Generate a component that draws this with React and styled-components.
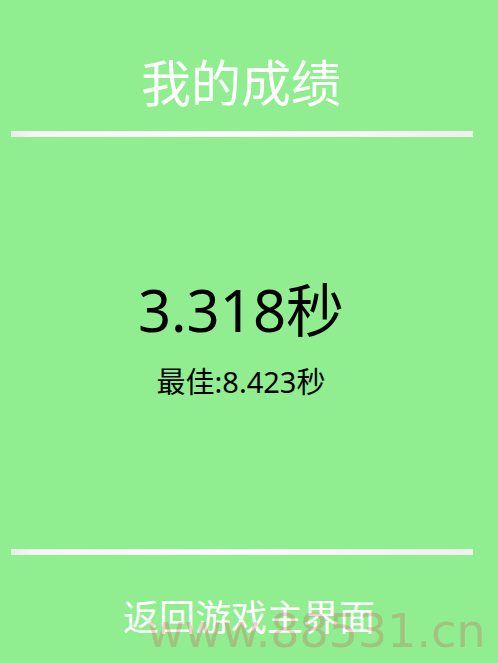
import React from "react";
import styled, { createGlobalStyle } from "styled-components";

const GlobalStyle = createGlobalStyle`
  html, body {
    margin: 0;
    padding: 0;
    background: #90ee90;
  }
  body {
    font-family: "Noto Sans CJK SC", "Noto Sans", sans-serif;
  }
`;

const Page = styled.div`
  position: relative;
  width: 498px;
  height: 663px;
  background: #90ee90;
  display: flex;
  flex-direction: column;
  overflow: hidden;
`;

const Title = styled.h1`
  margin: 0;
  padding: 46px 16px 0 0;
  height: 68px;
  line-height: 68px;
  font-size: 50px;
  font-weight: 400;
  color: #ffffff;
  text-align: center;
`;

const Divider = styled.div`
  margin: ${(p) => p.$top}px 0 0 11px;
  width: 462px;
  height: 6px;
  flex-shrink: 0;
  background: linear-gradient(
    to right,
    #ebebeb 0%,
    #f6f6f6 5%,
    #fbfbfb 45%,
    #f6f6f6 75%,
    #efefef 100%
  );
`;

const Result = styled.div`
  box-sizing: border-box;
  height: 412px;
  display: flex;
  flex-direction: column;
  align-items: center;
  padding: 140px 16px 0 0;
  font-family: "Noto Sans", "Noto Sans CJK SC", sans-serif;
  color: #000;
`;

const Time = styled.div`
  font-size: 58px;
  line-height: 66px;
`;

const Best = styled.div`
  margin-top: 21px;
  font-size: 29px;
  line-height: 36px;
`;

const BackButton = styled.button`
  margin: 37px auto 0;
  padding: 0;
  border: none;
  background: none;
  font-family: "Noto Sans CJK SC", sans-serif;
  font-size: 36px;
  line-height: 46px;
  color: #ffffff;
  cursor: pointer;
`;

const Watermark = styled.div`
  position: absolute;
  left: 147px;
  top: 608px;
  font-family: "DejaVu Sans", sans-serif;
  font-size: 46px;
  line-height: 46px;
  color: rgba(215, 85, 90, 0.3);
  pointer-events: none;
  white-space: nowrap;
`;

const App = () => {
  return (
    <Page>
      <GlobalStyle />
      <Title>我的成绩</Title>
      <Divider $top={17} />
      <Result>
        <Time>3.318秒</Time>
        <Best>最佳:8.423秒</Best>
      </Result>
      <Divider $top={0} />
      <BackButton>返回游戏主界面</BackButton>
      <Watermark>www.88531.cn</Watermark>
    </Page>
  );
};

export default App;
